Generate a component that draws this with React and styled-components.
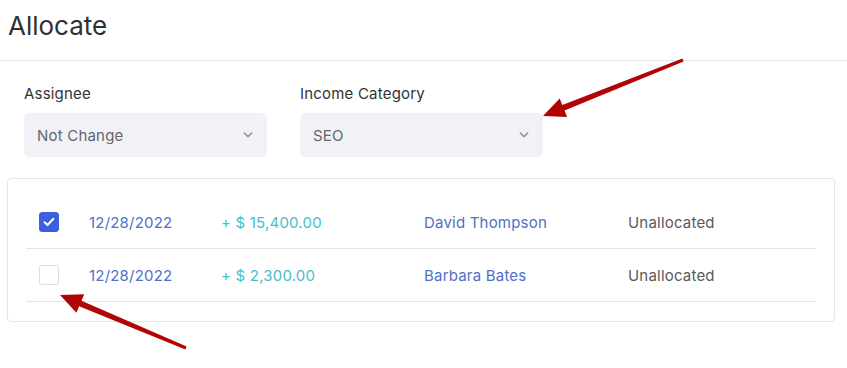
import React from 'react';
import styled, { createGlobalStyle } from 'styled-components';

const GlobalStyle = createGlobalStyle`
    body {
        margin: 0;
        background: #fff;
        font-family: Inter, "Noto Sans", Arial, sans-serif;
        color: #333;
    }
`;

const rows = [
    { date: '12/28/2022', amount: '+ $ 15,400.00', name: 'David Thompson', status: 'Unallocated', checked: true },
    { date: '12/28/2022', amount: '+ $ 2,300.00', name: 'Barbara Bates', status: 'Unallocated', checked: false },
];

function Chevron() {
    return (
        <svg width="10" height="6" viewBox="0 0 10 6">
            <path d="M1.5 1.2 L5 4.6 L8.5 1.2" fill="none" stroke="#9a9ca3" strokeWidth="1.8" strokeLinecap="round" strokeLinejoin="round" />
        </svg>
    );
}

function Select({ label, value }) {
    return (
        <Field>
            <Label>{label}</Label>
            <SelectBox>
                <span>{value}</span>
                <Chevron />
            </SelectBox>
        </Field>
    );
}

function App() {
    return (
        <Page>
            <GlobalStyle />
            <Header>
                <Title>Allocate</Title>
            </Header>
            <Filters>
                <Select label="Assignee" value="Not Change" />
                <Select label="Income Category" value="SEO" />
            </Filters>
            <Card>
                {rows.map((r, i) => (
                    <Row key={i}>
                        <Check checked={r.checked}>
                            {r.checked && (
                                <svg width="12" height="10" viewBox="0 0 12 10">
                                    <path d="M1.6 5.2 L4.5 8 L10.4 1.8" fill="none" stroke="#fff" strokeWidth="2" strokeLinecap="round" strokeLinejoin="round" />
                                </svg>
                            )}
                        </Check>
                        <Cell color="#4f70c8">{r.date}</Cell>
                        <Cell color="#45c0cb">{r.amount}</Cell>
                        <Cell color="#4f70c8">{r.name}</Cell>
                        <Cell color="#5a5a5e">{r.status}</Cell>
                    </Row>
                ))}
            </Card>
            <Arrows width="847" height="368" viewBox="0 0 847 368">
                <polygon points="682.4,58.6 562.3,105 559.7,98.5 543,116 567.1,117.1 564.5,110.6 683.6,61.4" fill="#b10505" />
                <polygon points="186.6,346.6 81.5,300.7 84.2,294.3 60,295 76.4,312.7 79.1,306.3 185.4,349.4" fill="#b10505" />
            </Arrows>
        </Page>
    );
}

const Page = styled.div`
    position: relative;
    width: 847px;
    height: 368px;
    overflow: hidden;
    letter-spacing: 0.2px;
`;

const Header = styled.div`
    height: 61px;
    padding: 8px 8px 0;
    box-sizing: border-box;
    border-bottom: 1px solid #e9e9ec;
`;

const Title = styled.h1`
    margin: 0;
    font-size: 26px;
    font-weight: 400;
    line-height: 36px;
    letter-spacing: 0;
    color: #2f3033;
`;

const Filters = styled.div`
    display: flex;
    gap: 33px;
    padding: 23px 24px 0;
`;

const Field = styled.div`
    display: flex;
    flex-direction: column;
    gap: 9px;
`;

const Label = styled.div`
    font-size: 15px;
    line-height: 20px;
    color: #333;
`;

const SelectBox = styled.div`
    width: 243px;
    height: 44px;
    box-sizing: border-box;
    display: flex;
    align-items: center;
    justify-content: space-between;
    padding: 0 14px 0 13px;
    background: #f1f2f7;
    border-radius: 5px;
    font-size: 15px;
    color: #666;
`;

const Card = styled.div`
    margin: 21px 12px 0 7px;
    border: 1px solid #e5e5e8;
    border-radius: 4px;
    padding: 17px 18px 19px;
`;

const Row = styled.div`
    display: grid;
    grid-template-columns: 50px 132px 203px 204px 1fr;
    align-items: center;
    height: 53px;
    box-sizing: border-box;
    padding-left: 13px;
    border-bottom: 1px solid #e5e5e8;
    font-size: 15px;
`;

const Check = styled.div`
    width: 20px;
    height: 20px;
    box-sizing: border-box;
    border-radius: 3px;
    display: flex;
    align-items: center;
    justify-content: center;
    background: ${p => (p.checked ? '#3c5fdd' : '#fff')};
    border: 1px solid ${p => (p.checked ? '#3c5fdd' : '#dcdde0')};
`;

const Cell = styled.div`
    color: ${p => p.color};
    white-space: nowrap;
`;

const Arrows = styled.svg`
    position: absolute;
    left: 0;
    top: 0;
    pointer-events: none;
`;

export default App;
